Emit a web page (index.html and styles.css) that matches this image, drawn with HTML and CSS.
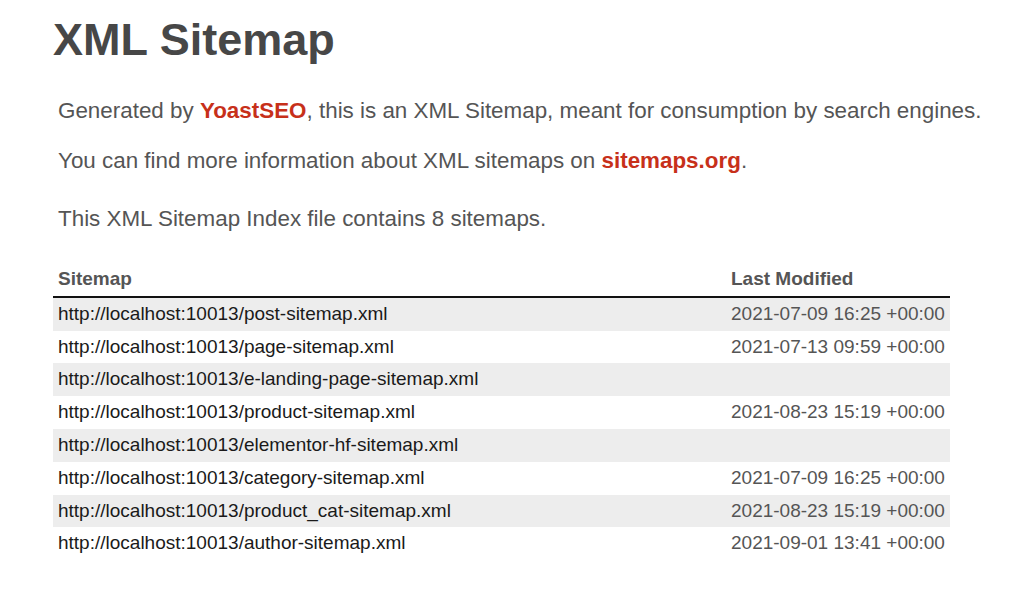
FILE: index.html
```html
<!DOCTYPE html>
<html lang="en">
<head>
<meta charset="utf-8">
<title>XML Sitemap</title>
<link rel="stylesheet" href="styles.css">
</head>
<body>
<div class="page">
  <h1 class="title">XML Sitemap</h1>
  <div class="intro">
    <p class="text">Generated by <a class="link" href="#">YoastSEO</a>, this is an XML Sitemap, meant for consumption by search engines.</p>
    <p class="text">You can find more information about XML sitemaps on <a class="link" href="#">sitemaps.org</a>.</p>
    <p class="text count">This XML Sitemap Index file contains 8 sitemaps.</p>
  </div>
  <table class="sitemaps">
    <thead>
      <tr><th class="col-loc">Sitemap</th><th class="col-mod">Last Modified</th></tr>
    </thead>
    <tbody>
      <tr><td class="loc">http://localhost:10013/post-sitemap.xml</td><td class="mod">2021-07-09 16:25 +00:00</td></tr>
      <tr><td class="loc">http://localhost:10013/page-sitemap.xml</td><td class="mod">2021-07-13 09:59 +00:00</td></tr>
      <tr><td class="loc">http://localhost:10013/e-landing-page-sitemap.xml</td><td class="mod"></td></tr>
      <tr><td class="loc">http://localhost:10013/product-sitemap.xml</td><td class="mod">2021-08-23 15:19 +00:00</td></tr>
      <tr><td class="loc">http://localhost:10013/elementor-hf-sitemap.xml</td><td class="mod"></td></tr>
      <tr><td class="loc">http://localhost:10013/category-sitemap.xml</td><td class="mod">2021-07-09 16:25 +00:00</td></tr>
      <tr><td class="loc">http://localhost:10013/product_cat-sitemap.xml</td><td class="mod">2021-08-23 15:19 +00:00</td></tr>
      <tr><td class="loc">http://localhost:10013/author-sitemap.xml</td><td class="mod">2021-09-01 13:41 +00:00</td></tr>
    </tbody>
  </table>
</div>
</body>
</html>
```
FILE: styles.css
```css
html, body {
  margin: 0;
  padding: 0;
  background: #fff;
}
body {
  font-family: "Liberation Sans", Arial, Helvetica, sans-serif;
  color: #555;
}
.page {
  padding: 17px 0 0 53px;
}
.title {
  margin: 0;
  font-size: 45px;
  line-height: 45px;
  font-weight: bold;
  color: #474747;
}
.intro {
  margin-top: 32px;
  padding-left: 5px;
  display: flex;
  flex-direction: column;
  gap: 17px;
}
.text {
  margin: 0;
  font-size: 22.4px;
  line-height: 33px;
  color: #555;
}
.count {
  margin-top: 8px;
}
.link {
  color: #c7301a;
  font-weight: bold;
  text-decoration: none;
}
.sitemaps {
  margin-top: 28px;
  width: 897px;
  border-collapse: collapse;
  font-size: 19px;
  line-height: 22.8px;
}
.sitemaps th {
  text-align: left;
  font-weight: bold;
  color: #555;
  padding: 5px 5px;
  border-bottom: 2px solid #111;
}
.sitemaps td {
  padding: 5px 5px;
}
.col-mod {
  width: 214px;
}
.loc {
  color: #1a1a1a;
}
.mod {
  color: #555;
}
.sitemaps tbody tr:nth-child(odd) {
  background: #ededed;
}
```
